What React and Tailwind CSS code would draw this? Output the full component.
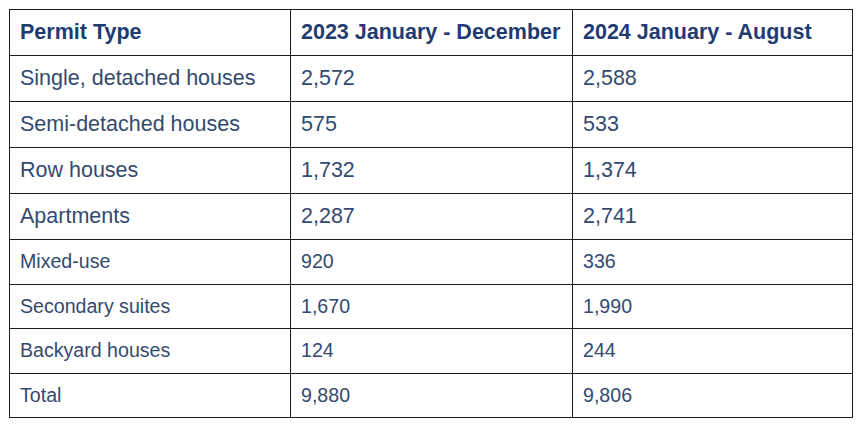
const rows = [
  { type: "Single, detached houses", y2023: "2,572", y2024: "2,588", big: true },
  { type: "Semi-detached houses", y2023: "575", y2024: "533", big: true },
  { type: "Row houses", y2023: "1,732", y2024: "1,374", big: true },
  { type: "Apartments", y2023: "2,287", y2024: "2,741", big: true },
  { type: "Mixed-use", y2023: "920", y2024: "336" },
  { type: "Secondary suites", y2023: "1,670", y2024: "1,990" },
  { type: "Backyard houses", y2023: "124", y2024: "244" },
  { type: "Total", y2023: "9,880", y2024: "9,806" },
];

export default function App() {
  return (
    <div
      className="w-[864px] h-[435px] bg-white pt-[9px] pl-[9px]"
      style={{ fontFamily: '"Liberation Sans", Arial, sans-serif' }}
    >
      <table className="border-collapse table-fixed w-[843px]">
        <colgroup>
          <col className="w-[281px]" />
          <col className="w-[282px]" />
          <col className="w-[280px]" />
        </colgroup>
        <thead>
          <tr className="h-[46px]">
            {["Permit Type", "2023 January - December", "2024 January - August"].map((h) => (
              <th
                key={h}
                className="border border-[#1c1c1c] px-[10px] text-left align-middle font-bold text-[21.5px] text-[#1f3b72] whitespace-nowrap"
              >
                {h}
              </th>
            ))}
          </tr>
        </thead>
        <tbody>
          {rows.map((r) => (
            <tr key={r.type} className={r.big ? "h-[46px]" : "h-[44.6px]"}>
              {[r.type, r.y2023, r.y2024].map((v, i) => (
                <td
                  key={i}
                  className={
                    r.big
                      ? "border border-[#1c1c1c] px-[10px] align-middle text-[21.5px] text-[#34496f] whitespace-nowrap"
                      : "border border-[#1c1c1c] px-[10px] align-middle text-[19.6px] text-[#34496f] whitespace-nowrap"
                  }
                >
                  {v}
                </td>
              ))}
            </tr>
          ))}
        </tbody>
      </table>
    </div>
  );
}
